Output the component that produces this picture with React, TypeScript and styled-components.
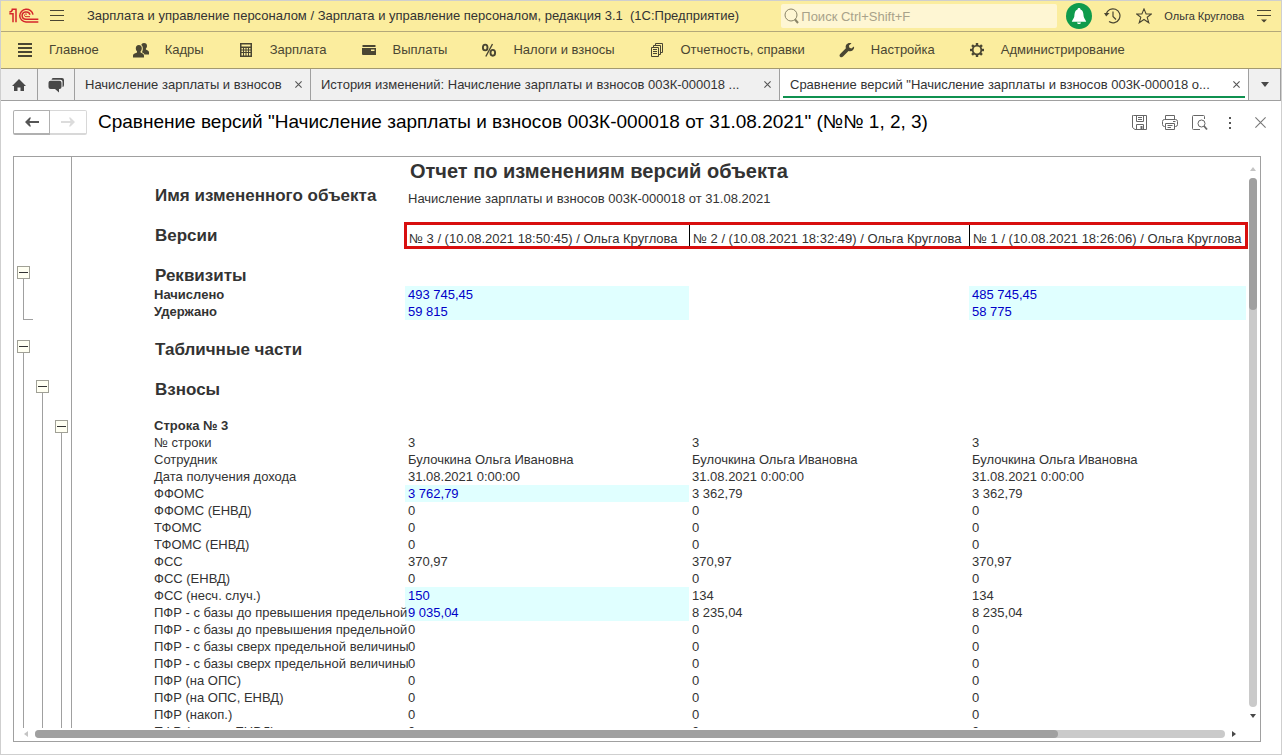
import React from "react";
import styled, { createGlobalStyle, css } from "styled-components";

const GlobalStyle = createGlobalStyle`
  * { box-sizing: border-box; }
  body { margin: 0; background: #fff; }
  body, button, input { font-family: "Liberation Sans", Arial, sans-serif; font-size: 13px; color: #333; }
  button { padding: 0; border: 0; background: none; cursor: pointer; }
  svg { display: block; flex: none; }
`;

const Window = styled.div`
  height: 100vh;
  display: flex;
  flex-direction: column;
  border: 1px solid #cfcfcf;
  background: #fff;
`;

/* ---------- title bar ---------- */

const TitleBar = styled.header`
  flex: none;
  height: 31px;
  display: flex;
  align-items: center;
  padding: 0 5px 0 8px;
  background: #fbed9e;
  border-bottom: 1px solid #b3a87a;
`;

const IconButton = styled.button<{ $w?: number }>`
  width: ${(p) => p.$w ?? 24}px;
  height: 24px;
  flex: none;
  display: flex;
  align-items: center;
  justify-content: center;
`;

const AppTitle = styled.h1`
  flex: 1;
  min-width: 0;
  margin: 0 12px;
  font-size: 13px;
  font-weight: 400;
  line-height: 20px;
  white-space: pre;
  overflow: hidden;
`;

const SearchBox = styled.label`
  flex: 0 1 276px;
  height: 24px;
  display: flex;
  align-items: center;
  gap: 2px;
  padding: 0 3px;
  background: #fef6d3;
  border-radius: 2px;
`;

const SearchInput = styled.input`
  flex: 1;
  min-width: 0;
  height: 22px;
  padding: 0;
  border: 0;
  outline: 0;
  background: transparent;
  &::placeholder { color: #a8a28a; opacity: 1; }
`;

const TitleTools = styled.div`
  flex: none;
  display: flex;
  align-items: center;
  gap: 8px;
  margin-left: 9px;
`;

const UserName = styled.a`
  font-size: 11px;
  color: #333;
  text-decoration: none;
  white-space: nowrap;
`;

/* ---------- section menu ---------- */

const Sections = styled.nav`
  flex: none;
  height: 37px;
  display: flex;
  align-items: center;
  gap: 34px;
  padding-left: 16px;
  background: #fbed9e;
  border-bottom: 1px solid #a39a70;
  overflow: hidden;
`;

const SectionLink = styled.a`
  display: flex;
  align-items: center;
  gap: 16px;
  color: #4a4632;
  text-decoration: none;
  white-space: nowrap;
  line-height: 20px;
`;

/* ---------- tabs ---------- */

const TabBar = styled.div`
  flex: none;
  height: 32px;
  display: flex;
  background: #f0f0f0;
  border-bottom: 1px solid #a0a0a0;
`;

const TabIcon = styled.button<{ $last?: boolean }>`
  flex: none;
  width: ${(p) => (p.$last ? 32 : 37)}px;
  display: flex;
  align-items: center;
  justify-content: center;
  border-right: 1px solid #a0a0a0;
`;

const Tab = styled.div<{ $active?: boolean; $fit?: boolean }>`
  flex: ${(p) => (p.$fit ? "0 0 236px" : "1 1 0")};
  min-width: 0;
  display: flex;
  align-items: center;
  gap: 4px;
  padding: 0 5px 0 10px;
  border-right: 1px solid #a0a0a0;
  ${(p) =>
    p.$active &&
    css`
      background: linear-gradient(#0f9150, #0f9150) 3px 27px / calc(100% - 6px) 2px no-repeat #fff;
    `}
`;

const TabLabel = styled.button`
  flex: 1;
  min-width: 0;
  height: 20px;
  overflow: hidden;
  white-space: nowrap;
  text-align: left;
`;

const TabClose = styled.button`
  flex: none;
  width: 14px;
  height: 14px;
  display: flex;
  align-items: center;
  justify-content: center;
`;

/* ---------- form header ---------- */

const FormHeader = styled.div`
  flex: none;
  display: flex;
  align-items: center;
  height: 55px;
  padding: 0 12px 12px;
`;

const History = styled.div`
  flex: none;
  display: flex;
  margin-right: 11px;
`;

const HistoryButton = styled.button`
  width: 37px;
  height: 25px;
  display: flex;
  align-items: center;
  justify-content: center;
  border: 1px solid #b0b0b0;
  border-bottom-width: 2px;
  border-radius: 2px 0 0 2px;
  background: #fff;
  &:disabled {
    border-color: #d8d8d8;
    border-left: 0;
    border-radius: 0 2px 2px 0;
  }
`;

const FormTitle = styled.h2`
  flex: 1;
  min-width: 0;
  margin: 0;
  padding-bottom: 2px;
  overflow: hidden;
  white-space: nowrap;
  font-size: 19px;
  font-weight: 400;
  line-height: 24px;
  color: #000;
`;

const FormTools = styled.div`
  flex: none;
  display: flex;
  gap: 6px;
  margin-right: -3px;
`;

/* ---------- report ---------- */

const Report = styled.main`
  flex: 1;
  min-height: 0;
  display: grid;
  grid-template: minmax(0, 1fr) 13px / minmax(0, 1fr) 12px;
  margin: 0 20px 12px 12px;
  border: 1px solid #a0a0a0;
`;

const Viewport = styled.div`
  display: flex;
  align-items: stretch;
  overflow: hidden;
`;

const Outline = styled.div`
  flex: none;
  display: flex;
  align-self: stretch;
  border-right: 1px solid #a0a0a0;
`;

const OutlineLevel = styled.div`
  width: 19px;
  padding-left: 3px;
  display: flex;
  flex-direction: column;
`;

const OutlineGap = styled.div<{ $h: number }>`
  flex: none;
  height: ${(p) => p.$h}px;
`;

const OutlineToggle = styled.button`
  flex: none;
  width: 13px;
  height: 13px;
  display: flex;
  align-items: center;
  justify-content: center;
  border: 1px solid #a0a096;
  background: #fffff2;
`;

const OutlineLine = styled.div<{ $h?: number }>`
  flex: ${(p) => (p.$h ? `0 0 ${p.$h}px` : "1")};
  width: 10px;
  margin-left: 6px;
  border: 0 solid #a0a0a0;
  border-left-width: 1px;
  border-bottom-width: ${(p) => (p.$h ? 1 : 0)}px;
`;

const Sheet = styled.div`
  position: relative;
  flex: 1;
  min-width: 0;
  padding: 0 2px 0 80px;
`;

/* red frame laid over the row of compared versions */
const VersionsFrame = styled.div`
  position: absolute;
  top: 65px;
  left: 332px;
  right: 0;
  height: 27px;
  border: 3px solid #d80f0f;
  pointer-events: none;
`;

const Table = styled.table`
  width: 100%;
  table-layout: fixed;
  border-collapse: separate;
  border-spacing: 0;
`;

const Column = styled.col<{ $w?: number }>`
  width: ${(p) => (p.$w ? `${p.$w}px` : "auto")};
`;

const Row = styled.tr<{ $h?: number }>`
  height: ${(p) => p.$h ?? 17}px;
`;

const cell = css`
  padding: 0 0 0 3px;
  line-height: 17px;
  text-align: left;
  font-weight: 400;
  white-space: nowrap;
`;

const Label = styled.th<{ $bold?: boolean }>`
  ${cell}
  padding-left: 2px;
  font-weight: ${(p) => (p.$bold ? 700 : 400)};
`;

const Heading = styled.th`
  ${cell}
  font-size: 17px;
  line-height: 20px;
  font-weight: 700;
`;

const ReportTitle = styled.th`
  ${cell}
  padding-left: 5px;
  font-size: 20px;
  line-height: 28px;
  font-weight: 700;
`;

const Value = styled.td<{ $changed?: boolean; $bottom?: boolean }>`
  ${cell}
  vertical-align: ${(p) => (p.$bottom ? "bottom" : "middle")};
  ${(p) =>
    p.$changed &&
    css`
      background: #e0ffff;
      color: #0000c8;
    `}
`;

const Version = styled.td<{ $first?: boolean }>`
  ${cell}
  padding: 0 0 2px ${(p) => (p.$first ? 4 : 3)}px;
  vertical-align: bottom;
  border-left: ${(p) => (p.$first ? 0 : 1)}px solid #000;
`;

/* ---------- scroll bars ---------- */

const ScrollBar = styled.div<{ $horizontal?: boolean }>`
  display: flex;
  align-items: center;
  flex-direction: ${(p) => (p.$horizontal ? "row" : "column")};
  padding: ${(p) => (p.$horizontal ? "0 5px 1px 3px" : "3px 3px 3px 0")};
`;

const ScrollArrow = styled.button`
  flex: 0 0 18px;
  display: flex;
  align-items: center;
  justify-content: center;
`;

const Track = styled.div<{ $horizontal?: boolean }>`
  flex: 1;
  min-width: 8px;
  display: flex;
  flex-direction: ${(p) => (p.$horizontal ? "row" : "column")};
  min-height: 8px;
  border-radius: 4px;
  background: #cacaca;
`;

const Thumb = styled.div<{ $portion: string }>`
  flex: 0 0 ${(p) => p.$portion};
  border-radius: 4px;
  background: #a0a0a0;
`;

/* ---------- icons ---------- */

const INK = "#4a4632";
const GREY = "#484848";

const Logo = () => (
  <svg width="30" height="16" viewBox="0 0 90 48" fill="none" stroke="#d5262b" strokeWidth="4.5">
    <path d="M1 12C7 12 10 9 10 4H21V43" />
    <path d="M1 17H12V43" />
    <path d="M72 20A20 19 0 1 0 51 42H88" />
    <path d="M63 20A12 11 0 1 0 51 34H88" />
    <path d="M54 20A4 4 0 1 0 51 26H63" strokeWidth="3" />
  </svg>
);

const Burger = () => (
  <svg width="14" height="12" stroke={INK} strokeWidth="1">
    <path d="M0 .5H14M0 5.5H14M0 10.5H14" />
  </svg>
);

const SearchIcon = () => (
  <svg width="15" height="16" fill="none" stroke="#8a8468" strokeWidth="1">
    <circle cx="7" cy="7" r="6" />
    <path d="M11 11.500L14 15" strokeWidth="2" />
  </svg>
);

const Bell = () => (
  <svg width="26" height="26">
    <circle cx="13" cy="13" r="13" fill="#0f9b4c" />
    <path d="M13 5c-1 0-1.500.7-1.500 1.500C8.800 7.500 8.600 10.500 8.300 13.500 8 15.500 6.500 16.500 5.800 18.700H20.200c-.7-2.200-2.200-3.200-2.500-5.200C17.400 10.500 17.200 7.500 14.500 6.500 14.500 5.700 14 5 13 5z" fill="#fff" />
    <path d="M11 19.500h4c-.3 2-3.700 2-4 0z" fill="#fff" />
  </svg>
);

const HistoryIcon = () => (
  <svg width="17" height="16" fill="none" stroke={INK} strokeWidth="1.200">
    <path d="M2.200 6A7 7 0 1 1 5 13.600" />
    <path d="M9 3.500V8.500L12 11.500" />
    <path d="M0 5L5.500 5L2.200 8.500Z" fill={INK} stroke="none" />
  </svg>
);

const Star = () => (
  <svg width="16" height="16" fill="none" stroke={INK} strokeWidth="1.100">
    <path d="M8 .9L10.100 6H15.400L11.200 9.300L12.800 14.800L8 11.500L3.200 14.800L4.800 9.300L.6 6H5.900Z" />
  </svg>
);

const Options = () => (
  <svg width="14" height="14" fill={INK}>
    <path d="M0 1H14V2H0ZM0 6H14V7H0ZM4 10.500H10L7 13.500Z" />
  </svg>
);

const MainIcon = () => (
  <svg width="16" height="16" fill={INK}>
    <path d="M1 1H15V3H1ZM1 5H15V7H1ZM1 9H15V11H1ZM1 13H15V15H1Z" />
  </svg>
);

const People = () => (
  <svg width="16" height="16" fill={INK}>
    <path d="M11 1c2 0 3 1.300 3 3 0 1.200-.5 2-1.100 2.600v1c1 .6 3.100 1 3.100 2.700V12.500H11.500C11 11 9.500 10.600 8.800 10.200 9.600 9.200 9.800 8 9.800 6.500 9.800 5 9.500 4 8.300 3 8.600 1.700 9.500 1 11 1z" />
    <path d="M5.800 3C7.800 3 8.800 4.400 8.800 6.200 8.800 7.800 8.200 8.700 7.600 9.300v1.200C8.600 11.200 11 11.500 11 13.700V15.500H0V13.700C0 11.500 3 11.200 4 10.500V9.300C3.400 8.700 2.800 7.800 2.800 6.200 2.800 4.400 3.800 3 5.800 3z" />
  </svg>
);

const Calculator = () => (
  <svg width="16" height="16" fill={INK} fillRule="evenodd">
    <path d="M2 1H14V15H2ZM3.500 2.500V4.500H12.500V2.500ZM3.500 6V7.500H5V6ZM6 6V7.500H7.500V6ZM8.500 6V7.500H10V6ZM11 6V7.500H12.500V6ZM3.500 8.500V10H5V8.500ZM6 8.500V10H7.500V8.500ZM8.500 8.500V10H10V8.500ZM11 8.500V10H12.500V8.500ZM3.500 11V13.500H5V11ZM6 11V13.500H7.500V11ZM8.500 11V13.500H10V11ZM11 11V13.500H12.500V11Z" />
  </svg>
);

const Card = () => (
  <svg width="16" height="16" fill={INK}>
    <path d="M1.500 3H14.500V5H1.500ZM1 6H15V13H2Q1 13 1 12ZM10 7.500V9H13.500V7.500Z" fillRule="evenodd" />
  </svg>
);

const Percent = () => (
  <svg width="16" height="16" fill="none" stroke={INK} strokeWidth="1.900">
    <ellipse cx="4.200" cy="5.500" rx="2.300" ry="2.900" />
    <ellipse cx="11.800" cy="10.800" rx="2.300" ry="2.900" />
    <path d="M11.500 2L4.800 14.500" strokeWidth="1.400" />
  </svg>
);

const Papers = () => (
  <svg width="16" height="16" fill="none" stroke={INK}>
    <path d="M2.500 5.500H9.500V14.500H2.500Z" />
    <path d="M4.500 5V3.500H11.500V12.500H10M6.500 3V1.500H13.500V10.500H12" />
    <path d="M4 7.500H8M4 9.500H8M4 11.500H8" />
  </svg>
);

const Wrench = () => (
  <svg width="16" height="16" fill={INK}>
    <path d="M15 4.500L12.300 6.500L10.200 5.600L10 3.500L12.500 1.300C10.500.5 8.500 1 7.400 2.500 6.500 3.800 6.500 5 6.900 6.200L1.200 11.900C.3 12.800.4 14 1.100 14.700 1.900 15.500 3.200 15.500 4 14.600L9.500 9C11 9.600 12.600 9.300 13.800 8.200 15 7 15.300 5.800 15 4.500z" />
  </svg>
);

const Gear = () => (
  <svg width="16" height="16" viewBox="0 0 16 16" fill="none" stroke={INK}>
    <circle cx="8" cy="8" r="4.300" strokeWidth="1.800" />
    {[0, 45, 90, 135, 180, 225, 270, 315].map((a) => (
      <path key={a} d="M8 1V3.500" strokeWidth="2.400" transform={`rotate(${a} 8 8)`} />
    ))}
  </svg>
);

const Home = () => (
  <svg width="14" height="14" fill={GREY}>
    <path d="M7 1L14 8H12V13H8.500V9.500H5.500V13H2V8H0Z" />
  </svg>
);

const Chat = () => (
  <svg width="17" height="16" fill={GREY}>
    <path d="M5 1H14Q16 1 16 3V8Q16 10 14.500 10V4.500Q14.500 2.700 12.500 2.700H3.500Q3.800 1 5 1Z" />
    <path d="M2.500 3.800H11.500Q13.500 3.800 13.500 5.800V10Q13.500 12 11.500 12H11V15.500L7 12H2.500Q.5 12 .5 10V5.800Q.5 3.800 2.500 3.800Z" />
  </svg>
);

const Cross = ({ size = 7, color = "#555" }: { size?: number; color?: string }) => (
  <svg width={size} height={size} viewBox={`0 0 ${size} ${size}`} stroke={color} strokeWidth="1.100">
    <path d={`M.4 .4L${size - 0.4} ${size - 0.4}M${size - 0.4} .4L.4 ${size - 0.4}`} />
  </svg>
);

const Arrow = ({ color, flip }: { color: string; flip?: boolean }) => (
  <svg width="14" height="10" viewBox="0 0 14 10" fill={color}>
    <path d={flip ? "M14 5L9.500 .5H8L9.500 4H0V6H9.500L8 9.500H9.500Z" : "M0 5L4.500 .5H6L4.500 4H14V6H4.500L6 9.500H4.500Z"} />
  </svg>
);

const Triangle = ({ d, color = GREY, w = 7, h = 4 }: { d: string; color?: string; w?: number; h?: number }) => (
  <svg width={w} height={h} fill={color}>
    <path d={d} />
  </svg>
);

const Save = () => (
  <svg width="16" height="16" fill="none" stroke="#666">
    <path d="M1.500 .5H14.500V14.500H3L.5 12.500V.5Z" />
    <path d="M4.500 .5V6.500H11.500V.5M6 2.500H10M6 4.500H10M4.500 14.500V9.500H11.500V14.500" />
    <path d="M8.500 11H10.500V14H8.500Z" fill="#666" stroke="none" />
  </svg>
);

const Printer = () => (
  <svg width="16" height="16" fill="none" stroke="#666">
    <path d="M3.500 4.500V.5H12.500V4.500M3.500 11.500H2.500Q.5 11.500 .5 9.500V6.500Q.5 4.500 2.500 4.500H13.500Q15.500 4.500 15.500 6.500V9.500Q15.500 11.500 13.500 11.500H12.500" />
    <path d="M3.500 8.500H12.500V14.500H3.500ZM5.500 10.500H10.500M5.500 12.500H9M11 6.500H13.500" />
  </svg>
);

const Preview = () => (
  <svg width="16" height="16" fill="none" stroke="#666">
    <path d="M8 14.500H1.500Q.5 14.500 .5 13.500V1.500Q.5 .5 1.500 .5H11.500Q12.500 .5 12.500 1.500V4" />
    <circle cx="9.500" cy="8.500" r="3.500" />
    <path d="M12 11L15 14.500" strokeWidth="1.800" />
  </svg>
);

const Dots = () => (
  <svg width="4" height="12" fill="#555">
    <path d="M1 0H3V2H1ZM1 5H3V7H1ZM1 10H3V12H1Z" />
  </svg>
);

const Minus = () => (
  <svg width="9" height="1" fill="#333">
    <path d="M0 0H9V1H0Z" />
  </svg>
);

/* ---------- data ---------- */

const sections = [
  { label: "Главное", icon: <MainIcon /> },
  { label: "Кадры", icon: <People /> },
  { label: "Зарплата", icon: <Calculator /> },
  { label: "Выплаты", icon: <Card /> },
  { label: "Налоги и взносы", icon: <Percent /> },
  { label: "Отчетность, справки", icon: <Papers /> },
  { label: "Настройка", icon: <Wrench /> },
  { label: "Администрирование", icon: <Gear /> },
];

const tabs = [
  { label: "Начисление зарплаты и взносов", fit: true },
  { label: "История изменений: Начисление зарплаты и взносов 003К-000018 ..." },
  { label: 'Сравнение версий "Начисление зарплаты и взносов 003К-000018 о...', active: true },
];

const versions = [
  "№ 3 / (10.08.2021 18:50:45) / Ольга Круглова",
  "№ 2 / (10.08.2021 18:32:49) / Ольга Круглова",
  "№ 1 / (10.08.2021 18:26:06) / Ольга Круглова",
];

type Line = { label: string; values: string[]; changed?: number[] };

const same = (label: string, value: string): Line => ({ label, values: [value, value, value] });

const requisites: Line[] = [
  { label: "Начислено", values: ["493 745,45", "", "485 745,45"], changed: [0, 2] },
  { label: "Удержано", values: ["59 815", "", "58 775"], changed: [0, 2] },
];

const contributions: Line[] = [
  same("№ строки", "3"),
  same("Сотрудник", "Булочкина Ольга Ивановна"),
  same("Дата получения дохода", "31.08.2021 0:00:00"),
  { label: "ФФОМС", values: ["3 762,79", "3 362,79", "3 362,79"], changed: [0] },
  same("ФФОМС (ЕНВД)", "0"),
  same("ТФОМС", "0"),
  same("ТФОМС (ЕНВД)", "0"),
  same("ФСС", "370,97"),
  same("ФСС (ЕНВД)", "0"),
  { label: "ФСС (несч. случ.)", values: ["150", "134", "134"], changed: [0] },
  { label: "ПФР - с базы до превышения предельной", values: ["9 035,04", "8 235,04", "8 235,04"], changed: [0] },
  same("ПФР - с базы до превышения предельной", "0"),
  same("ПФР - с базы сверх предельной величины", "0"),
  same("ПФР - с базы сверх предельной величины", "0"),
  same("ПФР (на ОПС)", "0"),
  same("ПФР (на ОПС, ЕНВД)", "0"),
  same("ПФР (накоп.)", "0"),
  same("ПФР (накоп., ЕНВД)", "0"),
];

const Lines = ({ lines, bold }: { lines: Line[]; bold?: boolean }) => (
  <>
    {lines.map((line, i) => (
      <Row key={i}>
        <Label scope="row" $bold={bold}>{line.label}</Label>
        {line.values.map((v, j) => (
          <Value key={j} $changed={line.changed?.includes(j)}>{v}</Value>
        ))}
      </Row>
    ))}
  </>
);

const Spacer = ({ h }: { h: number }) => (
  <Row $h={h} aria-hidden="true">
    <td colSpan={4} />
  </Row>
);

const HeadingRow = ({ children }: { children: React.ReactNode }) => (
  <Row $h={20}>
    <Heading colSpan={4}>{children}</Heading>
  </Row>
);

export default function App() {
  return (
    <>
      <GlobalStyle />
      <Window>
        <TitleBar>
          <Logo />
          <IconButton $w={36} aria-label="Меню"><Burger /></IconButton>
          <AppTitle>{"Зарплата и управление персоналом / Зарплата и управление персоналом, редакция 3.1  (1С:Предприятие)"}</AppTitle>
          <SearchBox>
            <SearchIcon />
            <SearchInput type="text" placeholder="Поиск Ctrl+Shift+F" aria-label="Поиск" />
          </SearchBox>
          <TitleTools>
            <IconButton $w={26} aria-label="Уведомления"><Bell /></IconButton>
            <IconButton aria-label="История"><HistoryIcon /></IconButton>
            <IconButton aria-label="Избранное"><Star /></IconButton>
            <UserName href="#">Ольга Круглова</UserName>
            <IconButton aria-label="Настройки окна"><Options /></IconButton>
          </TitleTools>
        </TitleBar>

        <Sections>
          {sections.map((s) => (
            <SectionLink key={s.label} href="#">
              {s.icon}
              {s.label}
            </SectionLink>
          ))}
        </Sections>

        <TabBar>
          <TabIcon aria-label="Начальная страница"><Home /></TabIcon>
          <TabIcon aria-label="Обсуждения"><Chat /></TabIcon>
          {tabs.map((t) => (
            <Tab key={t.label} $fit={t.fit} $active={t.active}>
              <TabLabel>{t.label}</TabLabel>
              <TabClose aria-label="Закрыть вкладку"><Cross /></TabClose>
            </Tab>
          ))}
          <TabIcon $last aria-label="Список вкладок"><Triangle d="M0 0H8L4 5Z" w={8} h={5} /></TabIcon>
        </TabBar>

        <FormHeader>
          <History>
            <HistoryButton aria-label="Назад"><Arrow color="#555" /></HistoryButton>
            <HistoryButton aria-label="Вперед" disabled><Arrow color="#dcdcdc" flip /></HistoryButton>
          </History>
          <FormTitle>Сравнение версий "Начисление зарплаты и взносов 003К-000018 от 31.08.2021" (№№ 1, 2, 3)</FormTitle>
          <FormTools>
            <IconButton aria-label="Сохранить"><Save /></IconButton>
            <IconButton aria-label="Печать"><Printer /></IconButton>
            <IconButton aria-label="Просмотр"><Preview /></IconButton>
            <IconButton aria-label="Еще"><Dots /></IconButton>
            <IconButton aria-label="Закрыть"><Cross size={11} color="#777" /></IconButton>
          </FormTools>
        </FormHeader>

        <Report>
          <Viewport>
            <Outline>
              <OutlineLevel>
                <OutlineGap $h={109} />
                <OutlineToggle aria-label="Свернуть реквизиты"><Minus /></OutlineToggle>
                <OutlineLine $h={41} />
                <OutlineGap $h={20} />
                <OutlineToggle aria-label="Свернуть табличные части"><Minus /></OutlineToggle>
                <OutlineLine />
              </OutlineLevel>
              <OutlineLevel>
                <OutlineGap $h={223} />
                <OutlineToggle aria-label="Свернуть взносы"><Minus /></OutlineToggle>
                <OutlineLine />
              </OutlineLevel>
              <OutlineLevel>
                <OutlineGap $h={263} />
                <OutlineToggle aria-label="Свернуть строку"><Minus /></OutlineToggle>
                <OutlineLine />
              </OutlineLevel>
            </Outline>
            <Sheet>
              <Table>
                <colgroup>
                  <Column $w={253} />
                  <Column $w={284} />
                  <Column $w={280} />
                  <Column />
                </colgroup>
                <tbody>
                  <Row $h={28}>
                    <td />
                    <ReportTitle colSpan={3}>Отчет по изменениям версий объекта</ReportTitle>
                  </Row>
                  <Row $h={22}>
                    <Heading scope="row">Имя измененного объекта</Heading>
                    <Value colSpan={3} $bottom>Начисление зарплаты и взносов 003К-000018 от 31.08.2021</Value>
                  </Row>
                  <Spacer h={15} />
                  <Row $h={27}>
                    <Heading scope="row">Версии</Heading>
                    {versions.map((v, i) => (
                      <Version key={v} $first={i === 0}>{v}</Version>
                    ))}
                  </Row>
                  <Spacer h={17} />
                  <HeadingRow>Реквизиты</HeadingRow>
                  <Lines lines={requisites} bold />
                  <Spacer h={20} />
                  <HeadingRow>Табличные части</HeadingRow>
                  <Spacer h={20} />
                  <HeadingRow>Взносы</HeadingRow>
                  <Spacer h={17} />
                  <Row>
                    <Label scope="row" $bold>Строка № 3</Label>
                    <td colSpan={3} />
                  </Row>
                  <Lines lines={contributions} />
                </tbody>
              </Table>
              <VersionsFrame />
            </Sheet>
          </Viewport>
          <ScrollBar>
            <ScrollArrow aria-label="Вверх"><Triangle d="M0 4H6L3 0Z" color="#c4c4c4" w={6} /></ScrollArrow>
            <Track><Thumb $portion="25%" /></Track>
            <ScrollArrow aria-label="Вниз"><Triangle d="M0 0H6L3 4Z" w={6} /></ScrollArrow>
          </ScrollBar>
          <ScrollBar $horizontal>
            <ScrollArrow aria-label="Влево"><Triangle d="M4 0V6L0 3Z" color="#c4c4c4" w={4} h={6} /></ScrollArrow>
            <Track $horizontal><Thumb $portion="86%" /></Track>
            <ScrollArrow aria-label="Вправо"><Triangle d="M0 0V6L4 3Z" w={4} h={6} /></ScrollArrow>
          </ScrollBar>
        </Report>
      </Window>
    </>
  );
}
